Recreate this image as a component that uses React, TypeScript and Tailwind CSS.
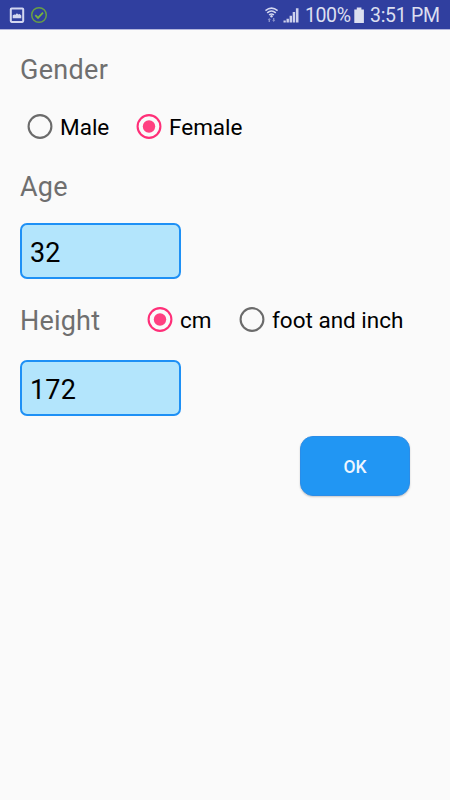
import React, { useState } from "react";

function Radio({ label, checked, onSelect, labelClass }: { label: string; checked: boolean; onSelect: () => void; labelClass: string }) {
  const color = checked ? "#ff2f78" : "#6b6b6b";
  return (
    <button type="button" role="radio" aria-checked={checked} onClick={onSelect} className="flex h-8 items-center gap-[7px]">
      <svg width="26" height="26" viewBox="0 0 26 26" fill="none" className="shrink-0">
        <circle cx="13" cy="12.5" r="11.4" stroke={color} strokeWidth="2.1" />
        {checked && <circle cx="13" cy="12.5" r="6.2" fill="#ff4081" />}
      </svg>
      <span className={`whitespace-nowrap pt-px leading-[29px] text-black ${labelClass}`}>{label}</span>
    </button>
  );
}

function StatusBar() {
  return (
    <header className="flex h-[30px] items-start border-b border-[#b3b6dc] bg-[#303f9f] pl-[9px] pr-[11px] text-[#dcdff0]">
      <svg width="40" height="29" viewBox="0 0 40 29" fill="none">
        <rect x="1.8" y="8.5" width="12.4" height="13.4" rx="0.8" stroke="#d3d7f0" strokeWidth="2" />
        <path d="M3.7 18.3v-3l1.6-.9 1.2.4 1.4-1.5 1.5 1.2 1.2-.4 1.7 1.5v2.7z" fill="#d3d7f0" />
        <circle cx="30" cy="15" r="7.3" stroke="#689f45" strokeWidth="1.5" />
        <path d="m26.3 15.2 2.7 2.7 5-5.2" stroke="#78b43d" strokeWidth="1.8" />
      </svg>
      <svg className="ml-auto" width="36" height="29" viewBox="0 0 36 29" fill="none">
        <g stroke="#d3d7f0" strokeWidth="1.6">
          <path d="M.4 10.6q6.1-5 12.2 0M2.2 12.8q4.3-3.6 8.6 0M4.1 15q2.4-2 4.8 0" />
        </g>
        <circle cx="6.5" cy="16.2" r="1.2" fill="#d3d7f0" />
        <path d="m2.7 20 1.6-2 1.6 2H5v2.1H3.6V20zM7.2 20H8v-2.1h1.4V20h.9l-1.6 2z" fill="#8790ca" />
        <path d="M18.5 20.5h2.3v2h-2.3zM21.5 18.7h2.4v3.8h-2.4zM24.6 15.8H27v6.7h-2.4zM27.7 12.1h2.4v10.4h-2.4zM30.9 8.2h2.6v14.3h-2.6z" fill="#cdd1ec" />
      </svg>
      <span className="ml-[4px] w-[46px] whitespace-nowrap pt-0.5 text-[19.5px] leading-[28px] tracking-[-0.4px]">100%</span>
      <svg className="ml-[2px] shrink-0" width="12" height="29" viewBox="0 0 12 29">
        <path d="M3.8 7.6h4.6v1.8h2.5V23H1.3V9.4h2.5z" fill="#dcdff0" />
      </svg>
      <span className="ml-1 w-[70px] whitespace-nowrap pl-px pt-0.5 text-[19.5px] leading-[28px] tracking-[-0.3px]">3:51 PM</span>
    </header>
  );
}

const fieldClass =
  "block h-14 w-[161px] rounded-[7px] border-2 border-[#1e90f5] bg-[#b3e5fc] pl-2 pt-[3px] text-[27px] tracking-[0.2px] text-black outline-none";

export default function App() {
  const [gender, setGender] = useState("female");
  const [unit, setUnit] = useState("cm");
  return (
    <div className="h-[800px] w-[450px] overflow-hidden bg-[#fafafa] font-['Roboto',sans-serif]">
      <StatusBar />
      <main className="flex flex-col pl-5">
        <h2 className="mt-6 h-8 text-[27px] leading-8 tracking-[0.3px] text-[#6f6f6f]">Gender</h2>
        <div className="ml-[7px] mt-[25px] flex">
          <div className="w-[109px]">
            <Radio label="Male" checked={gender === "male"} onSelect={() => setGender("male")} labelClass="text-[22.5px]" />
          </div>
          <Radio label="Female" checked={gender === "female"} onSelect={() => setGender("female")} labelClass="text-[22.5px]" />
        </div>
        <h2 className="mt-7 h-8 text-[27px] leading-8 tracking-[0.2px] text-[#6f6f6f]">Age</h2>
        <input aria-label="Age" className={`mt-5 ${fieldClass}`} defaultValue="32" />
        <div className="mt-[25px] flex h-8">
          <h2 className="w-[127px] pt-px text-[27px] leading-8 tracking-[0.2px] text-[#6f6f6f]">Height</h2>
          <div className="w-[92px]">
            <Radio label="cm" checked={unit === "cm"} onSelect={() => setUnit("cm")} labelClass="text-[22.5px]" />
          </div>
          <Radio label="foot and inch" checked={unit === "ft"} onSelect={() => setUnit("ft")} labelClass="text-[22.5px]" />
        </div>
        <input aria-label="Height" className={`mt-6 ${fieldClass}`} defaultValue="172" />
        <button type="button" className="ml-[280px] mt-5 h-[60px] w-[110px] rounded-[13px] border border-[#2b8de8] bg-[#2196f3] pt-[3px] text-[17.5px] font-medium text-[#eef6ff] shadow-[0_1px_2px_rgba(0,0,0,0.2)]">OK</button>
      </main>
    </div>
  );
}
